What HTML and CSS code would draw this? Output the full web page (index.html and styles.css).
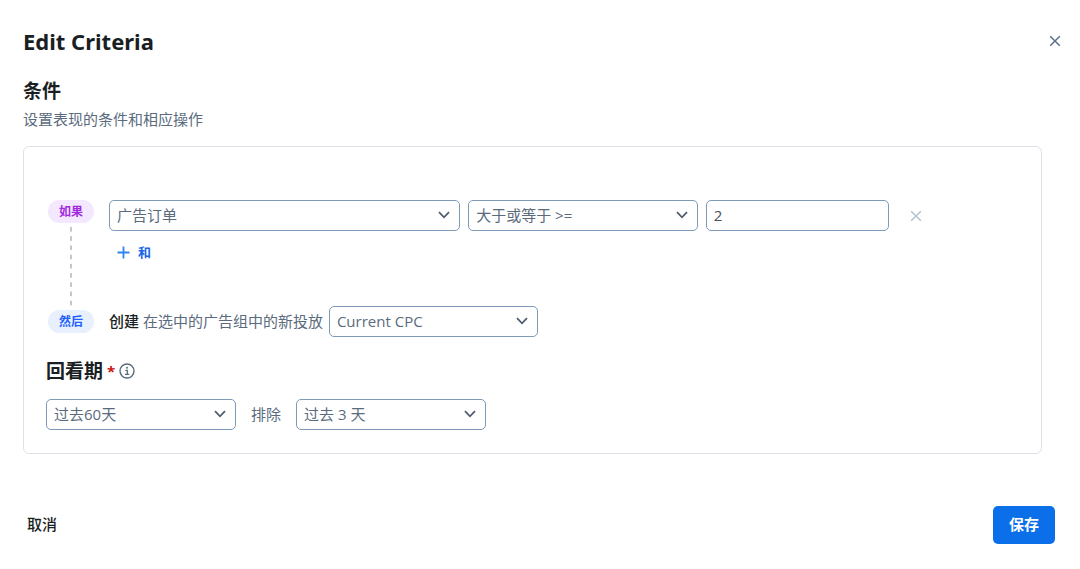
FILE: index.html
```html
<!DOCTYPE html>
<html lang="zh-CN">
<head>
<meta charset="utf-8">
<meta name="viewport" content="width=device-width, initial-scale=1">
<title>Edit Criteria</title>
<link rel="stylesheet" href="styles.css">
</head>
<body>
<form class="dialog">
  <header class="dialog-header">
    <h1 class="dialog-title">Edit Criteria</h1>
    <button class="icon-button" type="button" aria-label="关闭">
      <svg width="12" height="12" viewBox="0 0 12 12" fill="none" stroke="currentColor" stroke-width="1.5"><path d="M1.2 1.2 10.8 10.8M10.8 1.2 1.2 10.8"/></svg>
    </button>
  </header>

  <section class="criteria">
    <h2 class="section-title">条件</h2>
    <p class="section-text">设置表现的条件和相应操作</p>

    <div class="card">
      <div class="rule">
        <div class="rail">
          <span class="badge badge-if">如果</span>
          <span class="rail-line"></span>
        </div>
        <div class="rule-body">
          <div class="condition">
            <div class="select-box">
              <select class="field" aria-label="指标"><option>广告订单</option></select>
              <svg class="chevron" width="12" height="8" viewBox="0 0 12 8"><path d="M1 1.2 6 6.3 11 1.2"/></svg>
            </div>
            <div class="select-box">
              <select class="field" aria-label="运算符"><option>大于或等于 &gt;=</option></select>
              <svg class="chevron" width="12" height="8" viewBox="0 0 12 8"><path d="M1 1.2 6 6.3 11 1.2"/></svg>
            </div>
            <input class="field field-value" type="text" value="2" aria-label="数值">
            <button class="icon-button remove" type="button" aria-label="移除条件">
              <svg width="12" height="12" viewBox="0 0 12 12" fill="none" stroke="currentColor" stroke-width="1.5"><path d="M1.2 1.2 10.8 10.8M10.8 1.2 1.2 10.8"/></svg>
            </button>
          </div>
          <button class="add" type="button">
            <svg width="13" height="13" viewBox="0 0 13 13" fill="none" stroke="#2f86f0" stroke-width="1.8"><path d="M6.5 .5V12.5M.5 6.5H12.5"/></svg>
            和
          </button>
        </div>
        <div class="rail rail-end">
          <span class="badge badge-then">然后</span>
        </div>
        <div class="action">
          <label class="action-text" for="bid"><strong class="strong">创建</strong> 在选中的广告组中的新投放</label>
          <div class="select-box select-bid">
            <select class="field" id="bid"><option>Current CPC</option></select>
            <svg class="chevron" width="12" height="8" viewBox="0 0 12 8"><path d="M1 1.2 6 6.3 11 1.2"/></svg>
          </div>
        </div>
      </div>

      <div class="lookback-head">
        <h2 class="section-title" id="lookback">回看期</h2>
        <span class="required">*</span>
        <svg class="info" width="16" height="16" viewBox="0 0 16 16" fill="none" stroke="currentColor"><circle cx="8" cy="8" r="7" stroke-width="1.4"/><path d="M6.3 7.3H8.3V11.2M6 11.4H10.2" stroke-width="1.3"/><circle cx="8" cy="4.8" r="1" fill="currentColor" stroke="none"/></svg>
      </div>
      <div class="lookback">
        <div class="select-box select-period">
          <select class="field" aria-labelledby="lookback"><option>过去60天</option></select>
          <svg class="chevron" width="12" height="8" viewBox="0 0 12 8"><path d="M1 1.2 6 6.3 11 1.2"/></svg>
        </div>
        <label class="exclude-label" for="exclude">排除</label>
        <div class="select-box select-period">
          <select class="field" id="exclude"><option>过去 3 天</option></select>
          <svg class="chevron" width="12" height="8" viewBox="0 0 12 8"><path d="M1 1.2 6 6.3 11 1.2"/></svg>
        </div>
      </div>
    </div>
  </section>

  <footer class="dialog-footer">
    <button class="cancel" type="button">取消</button>
    <button class="save" type="submit">保存</button>
  </footer>
</form>
</body>
</html>
```

FILE: styles.css
```css
* {
  box-sizing: border-box;
}

body {
  margin: 0;
  background: #fff;
  color: #5b6b7e;
  font-family: "Open Sans", "Noto Sans CJK SC", sans-serif;
  font-size: 15px;
  line-height: 24px;
}

button,
input,
select {
  font: inherit;
}

button {
  padding: 0;
  border: 0;
  background: none;
  cursor: pointer;
}

svg {
  display: block;
  flex: none;
}

.dialog {
  padding: 24px 17px 24px 23px;
}

.dialog-header {
  display: flex;
  align-items: center;
  justify-content: space-between;
  height: 34px;
}

.dialog-title {
  margin: 0;
  color: #1a1f24;
  font-family: "Noto Sans", sans-serif;
  font-size: 22px;
  font-weight: 700;
  line-height: 34px;
}

.icon-button {
  color: #5b7086;
  padding: 2px;
}

.criteria {
  margin: 19px 21px 0 0;
}

.section-title {
  margin: 0;
  color: #1a1f24;
  font-size: 19px;
  font-weight: 700;
  line-height: 28px;
}

.section-text {
  margin: 2px 0 15px;
}

.card {
  padding: 53px 24px 23px 22px;
  border: 1px solid #dde2ea;
  border-radius: 6px;
}

.rule {
  display: grid;
  grid-template-columns: 50px minmax(0, 1fr);
  column-gap: 13px;
}

.rail {
  display: flex;
  flex-direction: column;
  align-items: center;
}

.rail-end {
  justify-content: center;
}

.badge {
  width: 46px;
  border-radius: 12px;
  font-size: 12px;
  font-weight: 700;
  line-height: 23px;
  text-align: center;
}

.badge-if {
  background: #f3e8ff;
  color: #a22be0;
}

.badge-then {
  background: #e8f0fe;
  color: #1f5fff;
}

.rail-line {
  flex: 1;
  width: 2px;
  margin: 4px 0 -4px;
  background: linear-gradient(#c6c6c6 50%, transparent 50%) 0 0 / 2px 9px repeat-y;
  background-repeat: no-repeat round;
}

.rule-body {
  padding-bottom: 41px;
}

.condition {
  display: grid;
  grid-template-columns: 352fr 230fr 184fr 120fr;
  gap: 8px;
  align-items: center;
}

.select-box {
  position: relative;
}

.field {
  display: block;
  width: 100%;
  height: 31px;
  padding: 0 32px 2px 7px;
  border: 1px solid #7d9ab8;
  border-radius: 5px;
  background: #fff;
  color: #5b6b7e;
  appearance: none;
}

.field-value {
  padding-right: 8px;
  color: #45505c;
}

.chevron {
  position: absolute;
  top: 11px;
  right: 10px;
  fill: none;
  stroke: #4f5d6e;
  stroke-width: 1.8;
  pointer-events: none;
}

.remove {
  justify-self: start;
  margin-left: 11px;
  color: #b3c1d3;
}

.add {
  display: flex;
  align-items: center;
  gap: 8px;
  margin: 9px 0 1px 8px;
  color: #1a66e8;
  font-size: 13px;
  font-weight: 700;
}

.action {
  display: flex;
  align-items: center;
  gap: 6px;
}

.action-text,
.exclude-label {
  padding-bottom: 2px;
}

.strong {
  color: #1a1f24;
  font-weight: 500;
}

.select-bid {
  width: 209px;
}

.lookback-head {
  display: flex;
  align-items: center;
  gap: 4px;
  margin: 20px 0 14px;
}

.required {
  color: #c81414;
  font-size: 15px;
  font-weight: 700;
}

.info {
  color: #5b6b7e;
}

.lookback {
  display: flex;
  align-items: center;
  gap: 15px;
}

.select-period {
  width: 190px;
}

.dialog-footer {
  display: flex;
  align-items: center;
  justify-content: space-between;
  margin-top: 52px;
  padding: 0 8px 0 4px;
}

.cancel {
  padding-bottom: 2px;
  color: #1a1f24;
  font-weight: 500;
}

.save {
  padding: 6px 16px 8px;
  border-radius: 5px;
  background: #0b6fea;
  color: #fff;
  font-weight: 700;
}
```
